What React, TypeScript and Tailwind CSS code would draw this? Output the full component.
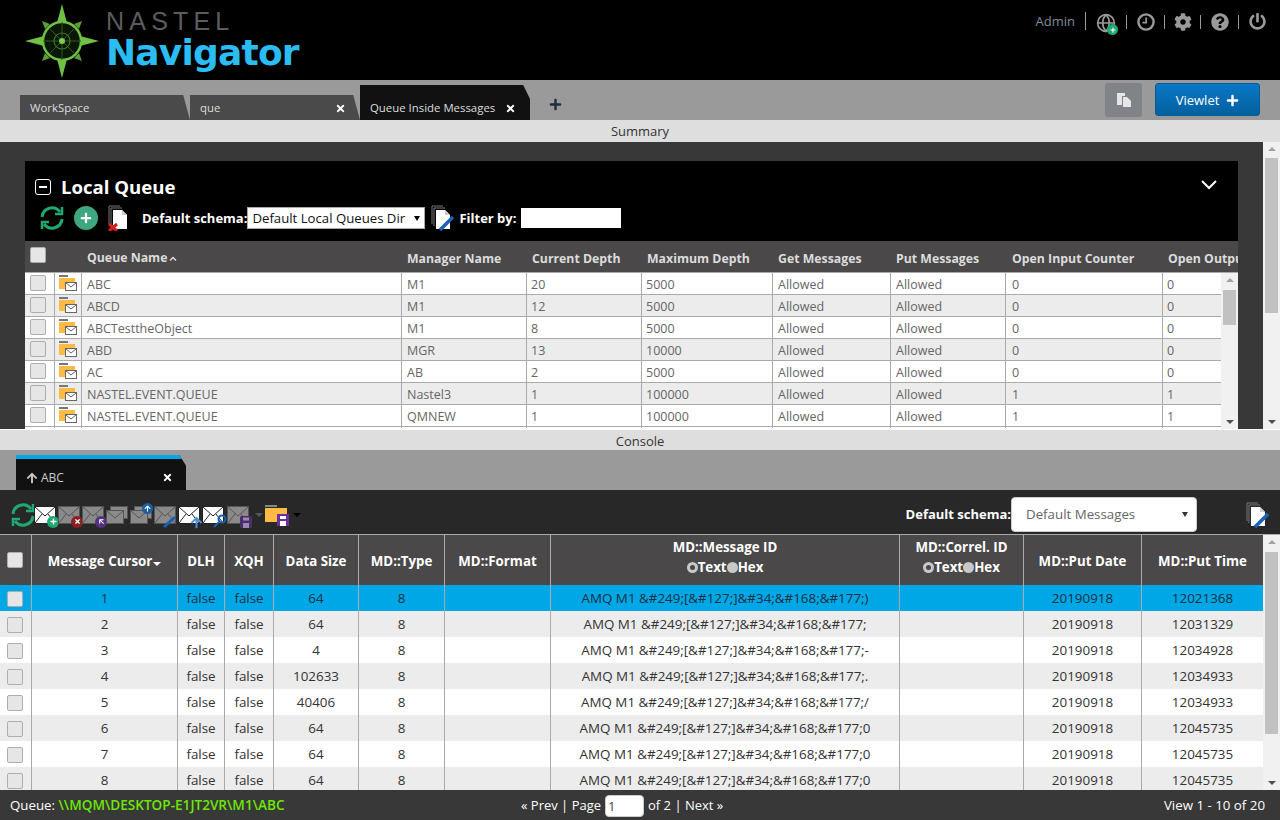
import { Globe } from 'lucide-react';
import { FaArrowUp, FaCog, FaPlus, FaPowerOff, FaQuestionCircle, FaTimes } from 'react-icons/fa';

const queues = [
  ['ABC', 'M1', '20', '5000', '0', '0'],
  ['ABCD', 'M1', '12', '5000', '0', '0'],
  ['ABCTesttheObject', 'M1', '8', '5000', '0', '0'],
  ['ABD', 'MGR', '13', '10000', '0', '0'],
  ['AC', 'AB', '2', '5000', '0', '0'],
  ['NASTEL.EVENT.QUEUE', 'Nastel3', '1', '100000', '1', '1'],
  ['NASTEL.EVENT.QUEUE', 'QMNEW', '1', '100000', '1', '1'],
];

const base = 'AMQ M1 &#249;[&#127;]&#34;&#168;&#177;';
const messages = [
  ['1', '64', base + ')', '12021368'],
  ['2', '64', base, '12031329'],
  ['3', '4', base + '-', '12034928'],
  ['4', '102633', base + '.', '12034933'],
  ['5', '40406', base + '/', '12034933'],
  ['6', '64', base + '0', '12045735'],
  ['7', '64', base + '0', '12045735'],
  ['8', '64', base + '0', '12045735'],
];

function Logo() {
  return (
    <svg width="74" height="74" viewBox="0 0 74 74" className="shrink-0">
      <path d="M37 0 L42 19 H32 Z M37 74 L42 55 H32 Z M0 37 L19 32 V42 Z M74 37 L55 32 V42 Z" fill="#6fc043" />
      <path d="M17 17 L25 20 L20 25 Z M57 17 L49 20 L54 25 Z M17 57 L25 54 L20 49 Z M57 57 L49 54 L54 49 Z" fill="#5a9c36" />
      <circle cx="37" cy="37" r="19" fill="#0b1706" stroke="#6fc043" strokeWidth="2.5" />
      <path d="M37 18 V56 M18 37 H56 M24 24 L50 50 M50 24 L24 50" stroke="#2f5a1b" strokeWidth="1" />
      <circle cx="37" cy="37" r="8" fill="none" stroke="#3f7424" strokeWidth="1.2" />
      <circle cx="37" cy="37" r="3" fill="#7ccb4c" />
    </svg>
  );
}

function Checkbox() {
  return <span className="block w-4 h-4 rounded-[2px] bg-[#e6e6e6] border border-[#adadad]" />;
}

function QueueIcon() {
  return (
    <svg width="18" height="18" viewBox="0 0 18 18">
      <path d="M0 1 H9 V3 H0 Z" fill="#777" />
      <path d="M0 4 H16 V15 H0 Z" fill="#ffbb44" />
      <rect x="6.5" y="8.5" width="11" height="8" fill="#fff" stroke="#666" />
      <path d="M7 9 L12 13 L17 9" fill="none" stroke="#666" />
    </svg>
  );
}

function Refresh({ size = 26 }: { size?: number }) {
  return (
    <svg width={size} height={size} viewBox="0 0 26 26" fill="none" stroke="#1fa971" strokeWidth="3">
      <path d="M3 12 A10 10 0 0 1 21 7" />
      <path d="M23 14 A10 10 0 0 1 5 19" />
      <path d="M23 2 V9 H16" strokeWidth="2.5" />
      <path d="M3 24 V17 H10" strokeWidth="2.5" />
    </svg>
  );
}

function Pages({ children }: { children?: React.ReactNode }) {
  return (
    <svg width="26" height="26" viewBox="0 0 26 26">
      <path d="M2 1 H13 M2 1 V19 M4 3 H15 M4 3 V21" stroke="#777" fill="none" />
      <path d="M6 5 H15 L20 10 V24 H6 Z" fill="#fff" />
      <path d="M15 5 V10 H20" fill="#ccc" />
      {children}
    </svg>
  );
}

const pencil = <path d="M10 25 L23 12" stroke="#1a62b8" strokeWidth="3.5" />;

function Envelope({ dim, badge }: { dim?: boolean; badge?: React.ReactNode }) {
  return (
    <span className="relative block w-[22px] h-[18px] shrink-0">
      <svg width="22" height="18" viewBox="0 0 22 18" className="block">
        <rect x="0.5" y="0.5" width="21" height="17" fill={dim ? '#8a8a8a' : '#fff'} stroke={dim ? '#555' : '#222'} />
        <path d="M1 1 L11 10 L21 1 M1 17 L8 8 M21 17 L14 8" fill="none" stroke={dim ? '#555' : '#222'} />
      </svg>
      {badge}
    </span>
  );
}

function Badge({ color, children }: { color: string; children?: React.ReactNode }) {
  return (
    <span className="absolute -right-[3px] -bottom-[4px] w-3 h-3 rounded-full flex items-center justify-center text-white" style={{ background: color }}>
      {children}
    </span>
  );
}

function EnvelopePair({ badge }: { badge?: React.ReactNode }) {
  return (
    <span className="relative block w-[22px] h-[18px] shrink-0">
      <svg width="22" height="18" viewBox="0 0 22 18" className="block">
        <rect x="4.5" y="0.5" width="17" height="12" fill="#8a8a8a" stroke="#555" />
        <rect x="0.5" y="4.5" width="17" height="13" fill="#8a8a8a" stroke="#555" />
        <path d="M1 5 L9 12 L17 5" fill="none" stroke="#555" />
      </svg>
      {badge}
    </span>
  );
}

function Tab({ label, close, active }: { label: string; close?: boolean; active?: boolean }) {
  return (
    <div
      className={
        active
          ? 'h-[35px] w-[170px] bg-[#111] [clip-path:polygon(0_0,96%_0,100%_40%,100%_100%,0_100%)] flex items-center justify-between pl-[10px] pr-[14px] pt-[11px] text-[11.4px] text-[#ddd]'
          : 'h-[25px] w-[170px] bg-[#4a4a4a] [clip-path:polygon(0_0,96%_0,100%_100%,0_100%)] flex items-center justify-between pl-[10px] pr-[14px] pt-px text-[11.4px] text-[#ddd]'
      }
    >
      <span>{label}</span>
      {close && <FaTimes className="w-[11px] h-[11px] text-white" />}
    </div>
  );
}

function Track({ thumbTop, thumbHeight, className }: { thumbTop: string; thumbHeight: string; className: string }) {
  return (
    <div className={'relative w-[17px] bg-[#f1f1f1] flex flex-col items-center justify-between py-[5px] ' + className}>
      <span className="w-0 h-0 border-x-[4px] border-x-transparent border-b-[4px] border-b-[#a3a3a3]" />
      <span className={'absolute left-[2px] right-[2px] bg-[#c1c1c1] ' + thumbTop + ' ' + thumbHeight} />
      <span className="w-0 h-0 border-x-[4px] border-x-transparent border-t-[4px] border-t-[#505050]" />
    </div>
  );
}

function Radio({ on }: { on?: boolean }) {
  return (
    <span className="w-[11px] h-[11px] rounded-full bg-[#c8c8c8] flex items-center justify-center shrink-0">
      {on && <span className="w-[5px] h-[5px] rounded-full bg-[#4a4848]" />}
    </span>
  );
}

const upperCols = 'grid grid-cols-[30px_27px_320px_125px_115px_131px_118px_115px_157px_80px]';
const lowerCols = 'grid grid-cols-[32px_146px_47px_49px_85px_86px_106px_349px_124px_118px_121px]';

export default function App() {
  return (
    <div className="w-[1280px] h-[820px] overflow-hidden flex flex-col bg-[#383838] font-['Open_Sans',sans-serif] text-xs">
      <header className="h-20 shrink-0 bg-black flex justify-between pl-[25px] pr-[14px]">
        <div className="flex items-start pt-[4px]">
          <Logo />
          <div className="ml-[7px] flex flex-col">
            <span className="font-['Liberation_Sans',sans-serif] text-[25px] leading-[26px] tracking-[5.2px] text-[#5c5c5c] pt-[4px]">NASTEL</span>
            <span className="font-['DejaVu_Sans',sans-serif] font-bold text-[36px] leading-[37px] tracking-[-0.8px] text-[#2bbdf2]">Navigator</span>
          </div>
        </div>
        <div className="flex items-start pt-[12px] text-[#9a9a9a]">
          <span className="text-[13px] leading-[18px] text-[#7f8c99] pr-[10px] mr-[10px] border-r border-[#9a9a9a]">Admin</span>
          <span className="relative block mr-[10px] pt-[1px]">
            <Globe className="w-[20px] h-[20px]" />
            <span className="absolute -right-[2px] -bottom-[2px] w-[11px] h-[11px] rounded-full bg-[#1fa971] flex items-center justify-center text-white">
              <FaPlus className="w-[6px] h-[6px]" />
            </span>
          </span>
          <span className="w-px h-[14px] bg-[#9a9a9a] mt-[3px] mr-[10px]" />
          <svg width="18" height="18" viewBox="0 0 18 18" fill="none" stroke="#9a9a9a" strokeWidth="2.4" className="mt-[1px] mr-[9px]">
            <circle cx="9" cy="9" r="7.6" />
            <path d="M9.2 4.5 V9.6 H5.5" strokeWidth="1.8" />
          </svg>
          <span className="w-px h-[14px] bg-[#9a9a9a] mt-[3px] mr-[9px]" />
          <FaCog className="w-[18px] h-[18px] mt-[1px] mr-[8px]" />
          <span className="w-px h-[14px] bg-[#9a9a9a] mt-[3px] mr-[10px]" />
          <FaQuestionCircle className="w-[18px] h-[18px] mt-[1px] mr-[9px]" />
          <span className="w-px h-[14px] bg-[#9a9a9a] mt-[3px] mr-[10px]" />
          <FaPowerOff className="w-[17px] h-[17px] mt-[1px]" />
        </div>
      </header>

      <div className="h-10 shrink-0 bg-[#9b9a9a] flex items-end justify-between pl-5 pr-5">
        <div className="flex items-end">
          <Tab label="WorkSpace" />
          <Tab label="que" close />
          <Tab label="Queue Inside Messages" close active />
          <FaPlus className="w-[13px] h-[13px] text-[#1f2d3d] ml-[19px] mb-[9px]" />
        </div>
        <div className="flex items-start self-start pt-[3px] gap-[13px]">
          <span className="w-[37px] h-[34px] rounded-[3px] bg-[#808488] flex items-center justify-center">
            <svg width="16" height="16" viewBox="0 0 16 16" fill="#e6e6e6">
              <path d="M1 1 H9 V4 H6 V13 H1 Z" />
              <path d="M7 5 H11 L15 9 V15 H7 Z" />
            </svg>
          </span>
          <span className="w-[105px] h-[33px] rounded-[3px] bg-gradient-to-b from-[#0a78c6] to-[#04609f] border border-[#075a94] text-white text-[13px] pt-[2px] flex items-center justify-center gap-[7px]">
            Viewlet <FaPlus className="w-[13px] h-[13px]" />
          </span>
        </div>
      </div>

      <div className="h-[22px] shrink-0 bg-[#dedede] text-[#333] text-[13px] pt-px flex items-center justify-center">Summary</div>

      <section className="h-[287px] shrink-0 flex overflow-hidden">
        <div className="w-[1263px] pt-[19px] pl-[25px] pr-[25px]">
          <div className="h-20 bg-black text-white relative">
            <div className="flex items-center pl-[10px] pt-[14px]">
              <span className="w-4 h-4 border-[1.5px] border-white rounded-[3px] flex items-center justify-center">
                <span className="w-2 h-[1.5px] bg-white" />
              </span>
              <span className="ml-[10px] text-[18.6px] leading-6 font-bold">Local Queue</span>
            </div>
            <div className="flex items-center pl-[14px] pt-[6px]">
              <Refresh />
              <span className="ml-[9px] w-6 h-6 rounded-full bg-[#3fa77f] flex items-center justify-center">
                <FaPlus className="w-3 h-3 text-white" />
              </span>
              <span className="ml-[9px]">
                <Pages>
                  <path d="M2 19 L10 26 M10 19 L2 26" stroke="#d02020" strokeWidth="3" />
                </Pages>
              </span>
              <b className="ml-[9px] text-[13px] leading-4">Default schema:</b>
              <span className="w-[178px] h-[22px] bg-white border border-[#aaa] text-[#111] text-[13.2px] leading-[19px] px-1 flex justify-between items-center overflow-hidden whitespace-nowrap">
                Default Local Queues Dir
                <span className="w-0 h-0 ml-1 shrink-0 border-x-[3px] border-x-transparent border-t-[5px] border-t-black" />
              </span>
              <span className="ml-[5px]">
                <Pages>{pencil}</Pages>
              </span>
              <b className="ml-[3px] text-[13px] leading-4">Filter by:</b>
              <span className="ml-[5px] w-[100px] h-[20px] bg-white" />
            </div>
            <svg width="18" height="12" viewBox="0 0 18 12" className="absolute right-[20px] top-[18px]" fill="none" stroke="#fff" strokeWidth="2">
              <path d="M2 2 L9 9 L16 2" />
            </svg>
          </div>
          <div className={upperCols + ' w-[1213px] h-[32px] overflow-hidden bg-[#4a4848] text-[#dcdcdc] font-bold text-[12.3px] border-b border-[#aaa]'}>
            <span className="pl-[5px] pt-[6px]"><Checkbox /></span>
            <span />
            <span className="pl-[5px] pt-[3px] flex items-center gap-[2px] h-[31px]">
              Queue Name
              <svg width="8" height="5" viewBox="0 0 8 5" fill="none" stroke="#dcdcdc" strokeWidth="1.5" className="mt-[1px]">
                <path d="M1 4.5 L4 1.5 L7 4.5" />
              </svg>
            </span>
            <span className="pl-[5px] leading-[36px]">Manager Name</span>
            <span className="pl-[5px] leading-[36px]">Current Depth</span>
            <span className="pl-[5px] leading-[36px]">Maximum Depth</span>
            <span className="pl-[5px] leading-[36px]">Get Messages</span>
            <span className="pl-[5px] leading-[36px]">Put Messages</span>
            <span className="pl-[6px] leading-[36px]">Open Input Counter</span>
            <span className="pl-[5px] leading-[36px] whitespace-nowrap">Open Output</span>
          </div>
          <div className="flex w-[1213px] bg-white">
            <div className="w-[1196px] overflow-hidden">
              {queues.map((q, i) => (
                <div key={i} className={upperCols + ' h-[22px] border-b border-[#aaa] text-[#666] text-[12.5px] leading-[23px] ' + (i % 2 ? 'bg-[#ececec]' : 'bg-white')}>
                  <span className="pl-[5px] pt-[2px] border-r border-[#aaa]"><Checkbox /></span>
                  <span className="pl-[4px] pt-[1px] border-r border-[#aaa]"><QueueIcon /></span>
                  <span className="pl-[5px] border-r border-[#aaa]">{q[0]}</span>
                  <span className="pl-[5px] border-r border-[#aaa]">{q[1]}</span>
                  <span className="pl-[4px] border-r border-[#aaa]">{q[2]}</span>
                  <span className="pl-[4px] border-r border-[#aaa]">{q[3]}</span>
                  <span className="pl-[5px] border-r border-[#aaa]">Allowed</span>
                  <span className="pl-[5px] border-r border-[#aaa]">Allowed</span>
                  <span className="pl-[6px] border-r border-[#aaa]">{q[4]}</span>
                  <span className="pl-[4px]">{q[5]}</span>
                </div>
              ))}
            </div>
            <Track thumbTop="top-[17px]" thumbHeight="h-[35px]" className="h-[156px]" />
          </div>
        </div>
        <Track thumbTop="top-[16px]" thumbHeight="h-[155px]" className="h-[287px]" />
      </section>

      <div className="h-[21px] shrink-0 bg-[#dedede] text-[#333] text-[13px] pt-[3px] flex items-center justify-center border-t border-white">Console</div>

      <div className="h-10 shrink-0 bg-[#9b9a9a] flex items-end pl-4">
        <div className="w-[170px] h-[35px] bg-[#111] border-t-[4px] border-[#00a7e6] [clip-path:polygon(0_0,96%_0,100%_30%,100%_100%,0_100%)] flex items-center justify-between pl-[10px] pr-[13px] pt-[6px] text-[#ccc]">
          <span className="flex items-center gap-[3px]"><FaArrowUp className="w-3 h-3" />ABC</span>
          <FaTimes className="w-[11px] h-[11px] text-white" />
        </div>
      </div>

      <div className="h-[45px] shrink-0 bg-[#282828] flex items-center pl-[10px] pr-[9px] pt-[5px] border-b border-[#aaa]">
        <Refresh />
        <span className="flex items-center gap-[2px] ml-[-2px]">
          <Envelope badge={<Badge color="#1fa971"><FaPlus className="w-[7px] h-[7px]" /></Badge>} />
          <Envelope dim badge={<Badge color="#8a2020"><FaTimes className="w-[7px] h-[7px]" /></Badge>} />
          <Envelope dim badge={<Badge color="#553080"><FaArrowUp className="w-[7px] h-[7px] -rotate-45" /></Badge>} />
          <EnvelopePair />
          <EnvelopePair badge={<span className="absolute right-[-1px] -top-[3px] w-[11px] h-[11px] rounded-full bg-[#1a5fa0] flex items-center justify-center text-white"><FaArrowUp className="w-[7px] h-[7px]" /></span>} />
          <Envelope dim badge={<svg width="14" height="14" viewBox="0 0 14 14" className="absolute left-[9px] -bottom-[4px]"><path d="M1 13 L12 3" stroke="#1a5fb0" strokeWidth="3" /></svg>} />
          <Envelope badge={<FaArrowUp className="absolute right-[-3px] -bottom-[5px] w-[13px] h-[13px] text-[#4a90d9]" />} />
          <Envelope badge={<svg width="14" height="14" viewBox="0 0 14 14" className="absolute -right-[3px] -bottom-[4px]" fill="none" stroke="#1a5fb0" strokeWidth="2"><circle cx="9" cy="5" r="3.5" /><path d="M6 8 L1 13" /></svg>} />
          <span className="ml-[1px]">
            <Envelope dim badge={
              <svg width="12" height="12" viewBox="0 0 12 12" className="absolute -right-[3px] -bottom-[4px]">
                <rect width="12" height="12" rx="1.5" fill="#4a2d6b" />
                <rect x="3" y="1.5" width="6" height="3" fill="#9a8ab0" />
                <rect x="3" y="7" width="6" height="5" fill="#9a8ab0" />
              </svg>
            } />
          </span>
        </span>
        <span className="ml-[6px] w-0 h-0 border-x-[4px] border-x-transparent border-t-[4px] border-t-[#555]" />
        <span className="relative ml-[2px] block w-6 h-[22px]">
          <svg width="24" height="22" viewBox="0 0 24 22">
            <path d="M0 1 H12 V3 H0 Z" fill="#888" />
            <path d="M0 4 H22 V18 H0 Z" fill="#ffbb44" />
            <rect x="12" y="10" width="12" height="12" fill="#6a2fa0" />
            <rect x="15" y="12" width="6" height="3" fill="#fff" />
            <rect x="15" y="17" width="6" height="5" fill="#fff" />
          </svg>
        </span>
        <span className="ml-[4px] w-0 h-0 border-x-[4px] border-x-transparent border-t-[4px] border-t-black" />
        <b className="ml-auto text-white text-[13px]">Default schema:</b>
        <span className="w-[186px] h-[35px] rounded-[4px] bg-white border border-[#ccc] text-[#666] text-[13.3px] flex items-center justify-between pl-[14px] pr-[8px]">
          Default Messages
          <span className="w-0 h-0 border-x-[3px] border-x-transparent border-t-[5px] border-t-[#333]" />
        </span>
        <span className="ml-[48px]">
          <Pages>{pencil}</Pages>
        </span>
      </div>

      <div className="flex h-[255px] shrink-0 overflow-hidden">
        <div className="w-[1263px]">
          <div className={lowerCols + ' h-[50px] bg-[#4a4848] text-white font-bold text-[13.3px] text-center'}>
            <span className="flex items-center justify-center pr-px border-r border-[#aaa]"><Checkbox /></span>
            <span className="flex items-center justify-center pt-[3px] border-r border-[#aaa]">Message Cursor<span className="w-0 h-0 ml-px mt-1 border-x-[4px] border-x-transparent border-t-[4px] border-t-white" /></span>
            <span className="flex items-center justify-center pt-[3px] border-r border-[#aaa]">DLH</span>
            <span className="flex items-center justify-center pt-[3px] border-r border-[#aaa]">XQH</span>
            <span className="flex items-center justify-center pt-[3px] border-r border-[#aaa]">Data Size</span>
            <span className="flex items-center justify-center pt-[3px] border-r border-[#aaa]">MD::Type</span>
            <span className="flex items-center justify-center pt-[3px] border-r border-[#aaa]">MD::Format</span>
            <span className="flex flex-col items-center justify-center gap-[2px] pb-[5px] border-r border-[#aaa]">
              MD::Message ID
              <span className="flex items-center"><Radio on />Text<Radio />Hex</span>
            </span>
            <span className="flex flex-col items-center justify-center gap-[2px] pb-[5px] border-r border-[#aaa]">
              MD::Correl. ID
              <span className="flex items-center"><Radio on />Text<Radio />Hex</span>
            </span>
            <span className="flex items-center justify-center pt-[3px] border-r border-[#aaa]">MD::Put Date</span>
            <span className="flex items-center justify-center pt-[3px]">MD::Put Time</span>
          </div>
          {messages.map((m, i) => (
            <div key={i} className={lowerCols + ' h-[26px] text-[13.4px] leading-[27px] text-center ' + (i === 0 ? 'bg-[#00a7e6] text-[#1b2f3b]' : i % 2 ? 'bg-[#ececec] text-[#333]' : 'bg-white text-[#333]')}>
              <span className="flex items-center justify-center pr-px border-r border-[#aaa]"><Checkbox /></span>
              <span className="border-r border-[#aaa]">{m[0]}</span>
              <span className="border-r border-[#aaa]">false</span>
              <span className="border-r border-[#aaa]">false</span>
              <span className="border-r border-[#aaa]">{m[1]}</span>
              <span className="border-r border-[#aaa]">8</span>
              <span className="border-r border-[#aaa]" />
              <span className="border-r border-[#aaa]">{m[2]}</span>
              <span className="border-r border-[#aaa]" />
              <span className="border-r border-[#aaa]">20190918</span>
              <span>{m[3]}</span>
            </div>
          ))}
        </div>
        <Track thumbTop="top-[17px]" thumbHeight="h-[182px]" className="h-[255px]" />
      </div>

      <footer className="h-[30px] shrink-0 bg-[#383838] text-white text-[13.3px] flex items-center justify-between pl-[10px] pr-[15px] pt-px relative">
        <span>Queue: <b className="font-semibold text-[13.6px] text-[#6ce800]">\\MQM\DESKTOP-E1JT2VR\M1\ABC</b></span>
        <span className="absolute left-[521px] top-px h-[30px] flex items-center gap-1 text-[13px]">
          « Prev | Page
          <span className="w-[39px] h-[22px] rounded-[4px] bg-white text-[#444] border border-[#ccc] pl-[2px] leading-[20px]">1</span>
          of 2 | Next »
        </span>
        <span>View 1 - 10 of 20</span>
      </footer>
    </div>
  );
}
